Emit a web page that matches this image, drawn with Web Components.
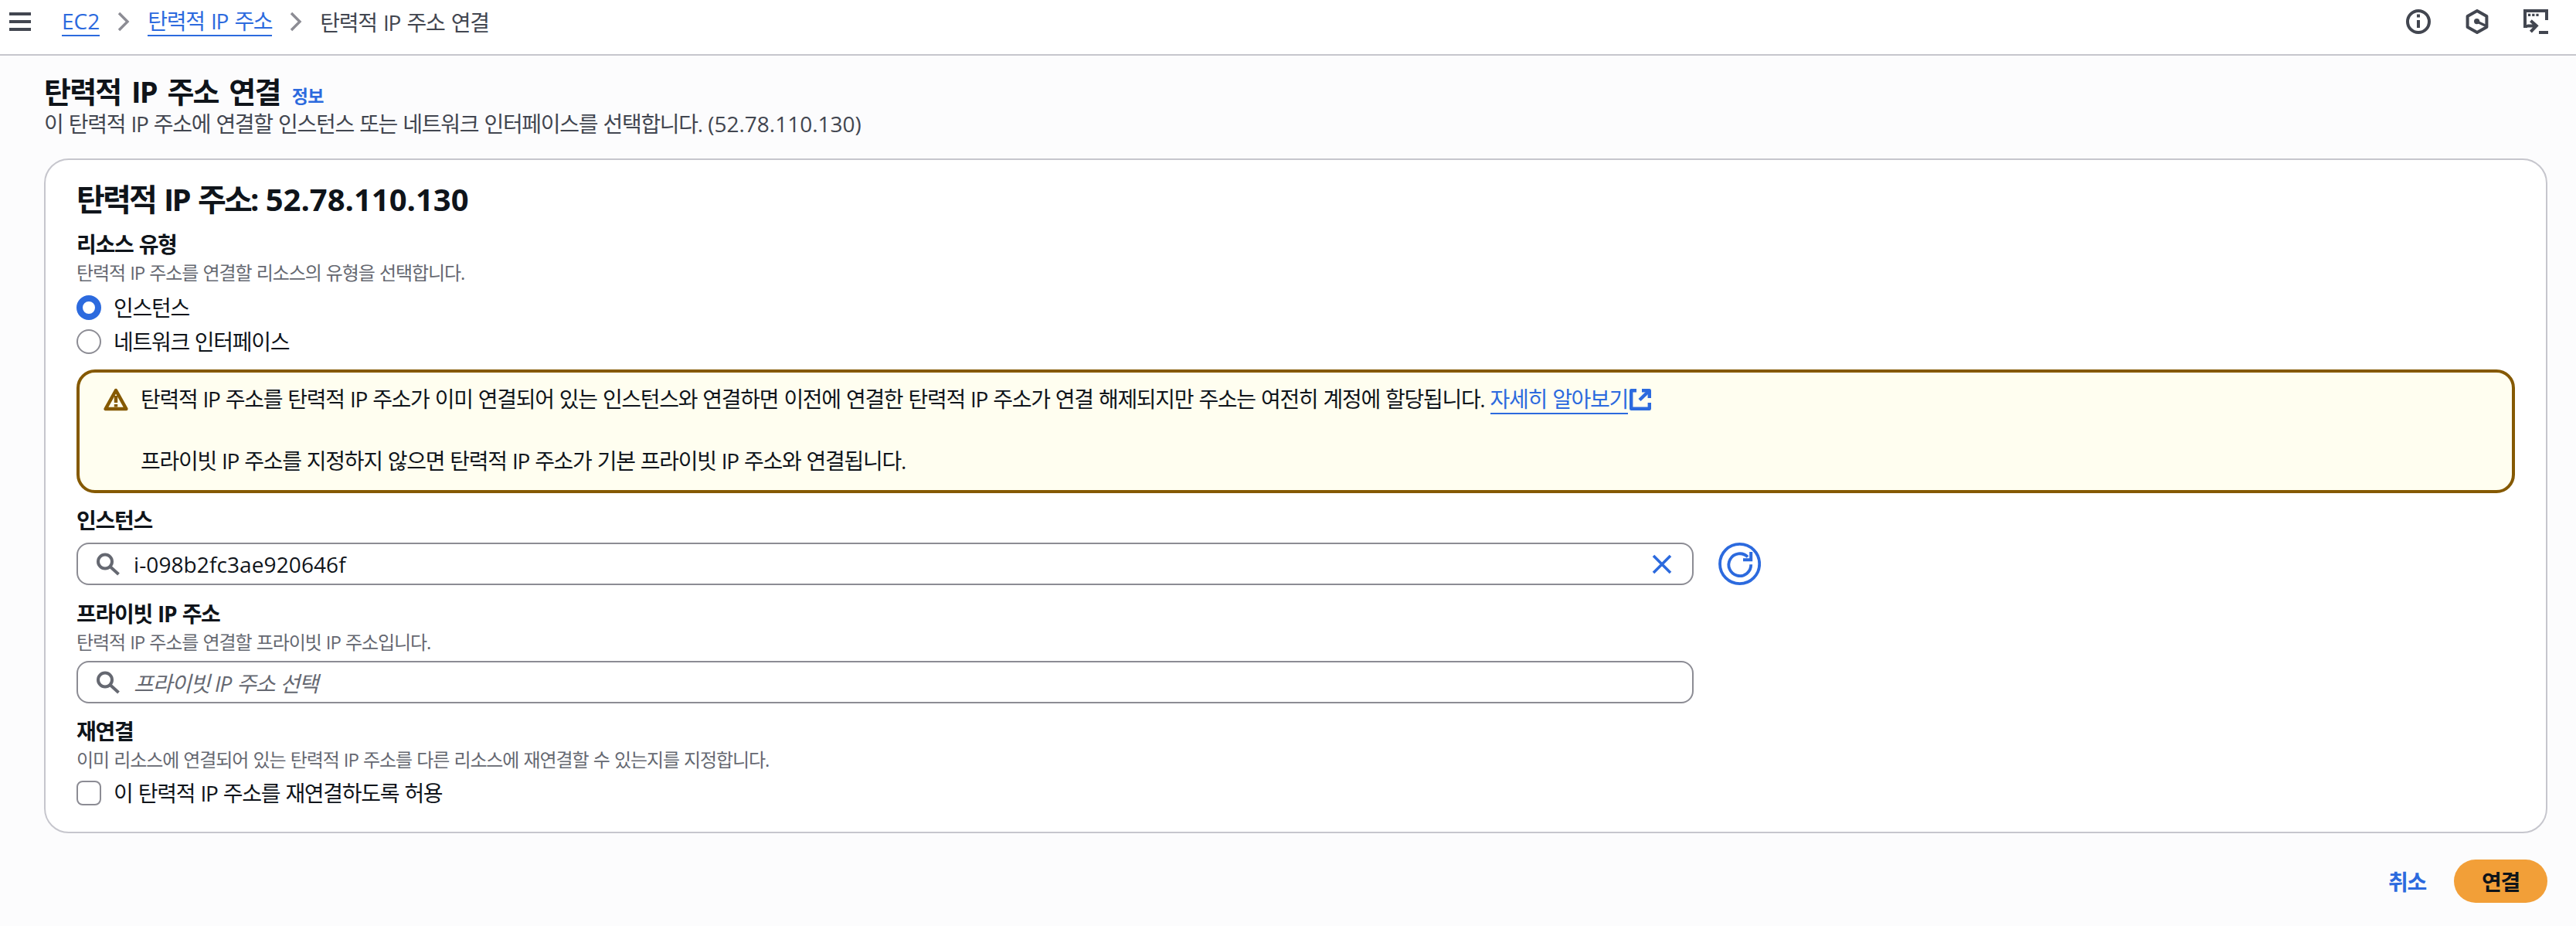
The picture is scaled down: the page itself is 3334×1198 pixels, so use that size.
<!doctype html>
<html lang="ko">
<head>
<meta charset="utf-8">
<title>탄력적 IP 주소 연결</title>
<style>
	html, body { margin: 0; padding: 0; }
	body {
		background: #fcfcfd;
		color: #0f141a;
		font-family: "Open Sans", "Noto Sans CJK KR", sans-serif;
		min-height: 1198px;
	}
</style>
</head>
<body>
<app-bar>
	<a-link slot="crumbs" underline><span style="letter-spacing:0">EC2</span></a-link>
	<crumb-sep slot="crumbs"></crumb-sep>
	<a-link slot="crumbs" underline>탄력적 IP 주소</a-link>
	<crumb-sep slot="crumbs"></crumb-sep>
	<span slot="crumbs" style="color:#424650">탄력적 IP 주소 연결</span>
</app-bar>

<page-head heading="탄력적 IP 주소 연결" description="이 탄력적 IP 주소에 연결할 인스턴스 또는 네트워크 인터페이스를 선택합니다. &lt;span style='letter-spacing:0'&gt;(52.78.110.130)&lt;/span&gt;"></page-head>

<form-card heading="탄력적 IP 주소: &lt;span style='letter-spacing:0'&gt;52.78.110.130&lt;/span&gt;">
	<form-field label="리소스 유형" description="탄력적 IP 주소를 연결할 리소스의 유형을 선택합니다." style="margin-top:20px">
		<div style="display:grid;gap:10px;margin-top:12px">
			<radio-option checked>인스턴스</radio-option>
			<radio-option>네트워크 인터페이스</radio-option>
		</div>
	</form-field>

	<alert-box style="margin-top:19px">
		<div>탄력적 IP 주소를 탄력적 IP 주소가 이미 연결되어 있는 인스턴스와 연결하면 이전에 연결한 탄력적 IP 주소가 연결 해제되지만 주소는 여전히 계정에 할당됩니다. <a-link underline external>자세히 알아보기</a-link></div>
		<div>&nbsp;</div>
		<div>프라이빗 IP 주소를 지정하지 않으면 탄력적 IP 주소가 기본 프라이빗 IP 주소와 연결됩니다.</div>
	</alert-box>

	<form-field label="인스턴스" style="margin-top:17px">
		<div style="display:flex;align-items:center;gap:32px;margin-top:11px">
			<search-input clearable><span style="letter-spacing:.1px">i-098b2fc3ae920646f</span></search-input>
			<refresh-button></refresh-button>
		</div>
	</form-field>

	<form-field label="프라이빗 IP 주소" description="탄력적 IP 주소를 연결할 프라이빗 IP 주소입니다." style="margin-top:19px">
		<search-input placeholder style="margin-top:8px">프라이빗 IP 주소 선택</search-input>
	</form-field>

	<form-field label="재연결" description="이미 리소스에 연결되어 있는 탄력적 IP 주소를 다른 리소스에 재연결할 수 있는지를 지정합니다." style="margin-top:18px">
		<check-option style="margin-top:11px">이 탄력적 IP 주소를 재연결하도록 허용</check-option>
	</form-field>
</form-card>

<form-actions>
	<a-link slot="cancel">취소</a-link>
	<span slot="submit">연결</span>
</form-actions>

<script>
const BLUE = '#2c6ade';

class AppBar extends HTMLElement {
	constructor() {
		super();
		this.attachShadow({ mode: 'open' });
		this.shadowRoot.innerHTML = `
		<style>
			:host {
				align-items: center;
				background: #fff;
				border-bottom: 2px solid #c6c6cd;
				display: flex;
				font-size: 28px;
				height: 70px;
				letter-spacing: -1.3px;
				padding: 0 36px 0 12px;
				word-spacing: 2.4px;
			}
			svg { display: block; }
			.crumbs { align-items: center; display: flex; flex: 1; gap: 23px; margin: -14px 0 0 40px; }
			.tools { display: flex; gap: 44px; margin-top: -14px; }
			.burger { margin-top: -14px; }
		</style>
		<svg class="burger" width="28" height="24" viewBox="0 0 28 24" fill="#424650">
			<rect width="28" height="4" y="0"></rect>
			<rect width="28" height="4" y="10"></rect>
			<rect width="28" height="4" y="20"></rect>
		</svg>
		<div class="crumbs"><slot name="crumbs"></slot></div>
		<div class="tools">
			<svg width="32" height="32" viewBox="0 0 16 16" fill="none" stroke="#424650" stroke-width="2">
				<circle cx="8" cy="8" r="7"></circle>
				<path d="M8 3.3v2M8 7v5"></path>
			</svg>
			<svg width="32" height="32" viewBox="0 0 16 16" fill="none" stroke="#424650" stroke-width="2" stroke-linejoin="round">
				<path d="M8 1l6.2 3.5v7L8 15l-6.2-3.5v-7z"></path>
				<circle cx="7.8" cy="7.8" r="1.3" fill="#424650" stroke-width="1"></circle>
				<path d="M8 8l5.5 2.6" stroke-width="1.6"></path>
			</svg>
			<svg width="32" height="32" viewBox="0 0 16 16" fill="none" stroke="#424650" stroke-width="2">
				<path d="M15 7V1H1v10h1.5"></path>
				<path d="M2.5 10.7H8M4.7 7.4L8.4 10.7 4.7 14.6"></path>
				<path d="M10 15h6"></path>
				<path d="M3 3.7h1.6M5.6 3.7h1.6M8.2 3.7h1.6" stroke-width="1.6"></path>
			</svg>
		</div>`;
	}
}

class ALink extends HTMLElement {
	constructor() {
		super();
		this.attachShadow({ mode: 'open' });
	}

	connectedCallback() {
		const external = this.hasAttribute('external') ? `
		<svg width="28" height="28" viewBox="0 0 28 28" fill="none" stroke="${BLUE}" stroke-width="4.4" stroke-linejoin="round">
			<path d="M9 2.2H2.2v23.6h23.6V18"></path>
			<path d="M16 2.2h9.8V12"></path>
			<path d="M25 3L13 14.5"></path>
		</svg>` : '';
		this.shadowRoot.innerHTML = `
		<style>
			:host { color: ${BLUE}; display: inline-flex; align-items: center; }
			.text { display: inline-block; }
			:host([underline]) .text { border-bottom: 2px solid ${BLUE}; line-height: 36px; }
			svg { margin-left: 2px; }
		</style>
		<span class="text"><slot></slot></span>${external}`;
	}
}

class CrumbSep extends HTMLElement {
	constructor() {
		super();
		this.attachShadow({ mode: 'open' });
		this.shadowRoot.innerHTML = `
		<style>:host { display: block; height: 26px; width: 16px; } svg { display: block; }</style>
		<svg width="16" height="26" viewBox="0 0 16 26" fill="none" stroke="#8c8c94" stroke-width="3.4">
			<path d="M2 2l11 11L2 24"></path>
		</svg>`;
	}
}

class PageHead extends HTMLElement {
	constructor() {
		super();
		this.attachShadow({ mode: 'open' });
	}

	connectedCallback() {
		this.shadowRoot.innerHTML = `
		<style>
			:host { display: block; padding: 24px 38px 0 57px; }
			.top { align-items: baseline; display: flex; gap: 15px; }
			h1 { font-size: 38px; font-weight: 700; letter-spacing: -1.8px; line-height: 44px; margin: 0; word-spacing: 5.5px; }
			.info { color: ${BLUE}; font-size: 23px; font-weight: 600; letter-spacing: -.5px; }
			p { color: #424650; font-size: 28px; letter-spacing: -1.3px; line-height: 36px; margin: 2px 0 0; word-spacing: 1.3px; }
		</style>
		<div class="top"><h1>${this.getAttribute('heading')}</h1><span class="info">정보</span></div>
		<p>${this.getAttribute('description')}</p>`;
	}
}

class FormCard extends HTMLElement {
	constructor() {
		super();
		this.attachShadow({ mode: 'open' });
	}

	connectedCallback() {
		this.shadowRoot.innerHTML = `
		<style>
			:host {
				background: #fff;
				border: 2px solid #c6c6cd;
				border-radius: 32px;
				display: block;
				margin: 27px 37px 0 57px;
				padding: 31px 40px 34px 40px;
			}
			h2 { font-size: 40px; font-weight: 700; letter-spacing: -2.8px; line-height: 40px; margin: 0; word-spacing: 3.5px; }
		</style>
		<h2>${this.getAttribute('heading')}</h2>
		<slot></slot>`;
	}
}

class FormField extends HTMLElement {
	constructor() {
		super();
		this.attachShadow({ mode: 'open' });
	}

	connectedCallback() {
		const desc = this.getAttribute('description');
		this.shadowRoot.innerHTML = `
		<style>
			:host { display: block; }
			.label { font-size: 28px; font-weight: 700; letter-spacing: -1.3px; line-height: 36px; word-spacing: 1.3px; }
			.desc { color: #656871; font-size: 24px; letter-spacing: -1.1px; line-height: 32px; margin-top: 3px; word-spacing: 1.1px; }
		</style>
		<div class="label">${this.getAttribute('label')}</div>
		${desc ? `<div class="desc">${desc}</div>` : ''}
		<slot></slot>`;
	}
}

class RadioOption extends HTMLElement {
	constructor() {
		super();
		this.attachShadow({ mode: 'open' });
	}

	connectedCallback() {
		const on = this.hasAttribute('checked');
		this.shadowRoot.innerHTML = `
		<style>
			:host { align-items: center; display: flex; font-size: 28px; gap: 16px; height: 34px; letter-spacing: -1.3px; line-height: 34px; word-spacing: 1px; }
			.dot {
				background: #fff;
				border: ${on ? `8px solid ${BLUE}` : '2px solid #8c8c94'};
				border-radius: 50%;
				box-sizing: border-box;
				height: 32px;
				width: 32px;
			}
		</style>
		<span class="dot"></span><span><slot></slot></span>`;
	}
}

class CheckOption extends HTMLElement {
	constructor() {
		super();
		this.attachShadow({ mode: 'open' });
		this.shadowRoot.innerHTML = `
		<style>
			:host { align-items: center; display: flex; font-size: 28px; gap: 16px; height: 32px; letter-spacing: -1.3px; line-height: 32px; word-spacing: 1.3px; }
			.box {
				background: #fff;
				border: 2px solid #8c8c94;
				border-radius: 8px;
				box-sizing: border-box;
				height: 32px;
				width: 32px;
			}
		</style>
		<span class="box"></span><span><slot></slot></span>`;
	}
}

class AlertBox extends HTMLElement {
	constructor() {
		super();
		this.attachShadow({ mode: 'open' });
		this.shadowRoot.innerHTML = `
		<style>
			:host {
				background: #fffef0;
				border: 4px solid #855900;
				border-radius: 24px;
				display: flex;
				font-size: 28px;
				gap: 16px;
				letter-spacing: -1.3px;
				line-height: 40px;
				padding: 14px 32px 18px 31px;
				word-spacing: 1.2px;
			}
			svg { flex: none; margin-top: 6px; }
		</style>
		<svg width="32" height="32" viewBox="0 0 32 32" fill="none" stroke="#855900" stroke-width="4.4" stroke-linejoin="round">
			<path d="M16 3L2.6 27h26.8z"></path>
			<path d="M16 10v9M16 21v3.5"></path>
		</svg>
		<div><slot></slot></div>`;
	}
}

class SearchInput extends HTMLElement {
	constructor() {
		super();
		this.attachShadow({ mode: 'open' });
	}

	connectedCallback() {
		const clear = this.hasAttribute('clearable') ? `
		<svg class="clear" width="26" height="26" viewBox="0 0 26 26" fill="none" stroke="${BLUE}" stroke-width="3.6">
			<path d="M2 2l22 22M24 2L2 24"></path>
		</svg>` : '';
		this.shadowRoot.innerHTML = `
		<style>
			:host {
				align-items: center;
				background: #fff;
				border: 2px solid #8c8c94;
				border-radius: 16px;
				box-sizing: border-box;
				display: flex;
				font-size: 28px;
				height: 55px;
				letter-spacing: -1.3px;
				padding: 0 26px 0 24px;
				width: 2093px;
				word-spacing: 1.3px;
			}
			:host([placeholder]) .text { color: #656871; font-style: italic; }
			.text { flex: 1; margin-left: 18px; }
			svg { display: block; flex: none; }
		</style>
		<svg width="30" height="30" viewBox="0 0 30 30" fill="none" stroke="#656871" stroke-width="4">
			<circle cx="11" cy="11.5" r="9"></circle>
			<path d="M17.5 18l11 10"></path>
		</svg>
		<span class="text"><slot></slot></span>${clear}`;
	}
}

class RefreshButton extends HTMLElement {
	constructor() {
		super();
		this.attachShadow({ mode: 'open' });
		this.shadowRoot.innerHTML = `
		<style>:host { display: block; height: 55px; width: 55px; } svg { display: block; }</style>
		<svg width="55" height="55" viewBox="0 0 55 55" fill="none" stroke="${BLUE}" stroke-width="3.8">
			<circle cx="27.6" cy="27.5" r="25.6"></circle>
			<path d="M38 18.5A14.4 14.4 0 1 0 42.2 28.3"></path>
			<path d="M32 22.3h10.2V12" stroke-width="4"></path>
		</svg>`;
	}
}

class FormActions extends HTMLElement {
	constructor() {
		super();
		this.attachShadow({ mode: 'open' });
		this.shadowRoot.innerHTML = `
		<style>
			:host {
				align-items: center;
				display: flex;
				font-size: 28px;
				font-weight: 700;
				gap: 36px;
				justify-content: flex-end;
				letter-spacing: -1.3px;
				margin: 34px 37px 0 0;
			}
			.primary {
				align-items: center;
				background: #f29f38;
				border-radius: 28px;
				color: #0f141a;
				display: flex;
				height: 56px;
				justify-content: center;
				width: 121px;
			}
		</style>
		<slot name="cancel"></slot>
		<div class="primary"><slot name="submit"></slot></div>`;
	}
}

customElements.define('app-bar', AppBar);
customElements.define('a-link', ALink);
customElements.define('crumb-sep', CrumbSep);
customElements.define('page-head', PageHead);
customElements.define('form-card', FormCard);
customElements.define('form-field', FormField);
customElements.define('radio-option', RadioOption);
customElements.define('check-option', CheckOption);
customElements.define('alert-box', AlertBox);
customElements.define('search-input', SearchInput);
customElements.define('refresh-button', RefreshButton);
customElements.define('form-actions', FormActions);
</script>
</body>
</html>
